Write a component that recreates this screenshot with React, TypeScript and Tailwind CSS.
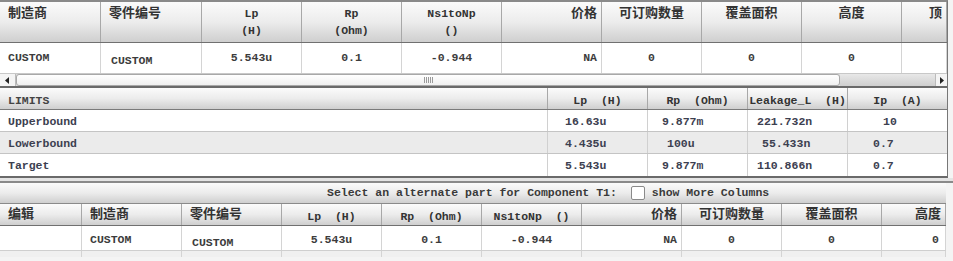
import React from 'react';

const mono = { fontFamily: '"Liberation Mono", "Noto Sans CJK SC", monospace' };

const hdrBg = 'bg-gradient-to-b from-[#fbfbfb] via-[#ececec] to-[#cfcfcf]';

type Col = { w: string; label: React.ReactNode; align: 'left' | 'center' | 'right' };

const topCols: Col[] = [
    { w: 'w-[101px]', label: '制造商', align: 'left' },
    { w: 'w-[101px]', label: '零件编号', align: 'left' },
    { w: 'w-[100px]', label: <>Lp<br />(H)</>, align: 'center' },
    { w: 'w-[100px]', label: <>Rp<br />(Ohm)</>, align: 'center' },
    { w: 'w-[100px]', label: <>Ns1toNp<br />()</>, align: 'center' },
    { w: 'w-[100px]', label: '价格', align: 'right' },
    { w: 'w-[100px]', label: '可订购数量', align: 'center' },
    { w: 'w-[100px]', label: '覆盖面积', align: 'center' },
    { w: 'w-[100px]', label: '高度', align: 'center' },
    { w: 'w-[45px]', label: '顶', align: 'right' },
];

const topRow = ['CUSTOM', 'CUSTOM', '5.543u', '0.1', '-0.944', 'NA', '0', '0', '0', ''];

const bottomCols: Col[] = [
    { w: 'w-[82px]', label: '编辑', align: 'left' },
    { w: 'w-[100px]', label: '制造商', align: 'left' },
    { w: 'w-[100px]', label: '零件编号', align: 'left' },
    { w: 'w-[100px]', label: 'Lp (H)', align: 'center' },
    { w: 'w-[100px]', label: 'Rp (Ohm)', align: 'center' },
    { w: 'w-[100px]', label: 'Ns1toNp ()', align: 'center' },
    { w: 'w-[100px]', label: '价格', align: 'right' },
    { w: 'w-[100px]', label: '可订购数量', align: 'center' },
    { w: 'w-[100px]', label: '覆盖面积', align: 'center' },
    { w: 'w-[64px]', label: '高度', align: 'right' },
];

const bottomRow = ['', 'CUSTOM', 'CUSTOM', '5.543u', '0.1', '-0.944', 'NA', '0', '0', '0'];

const alignCls = (a: Col['align']) =>
    a === 'left' ? 'text-left pl-2' : a === 'right' ? 'text-right pr-1' : 'text-center';

// values sit at slightly different offsets in each cell, like the original grid
const limits = [
    { name: 'Upperbound', v: ['16.63u', '9.877m', '221.732n', '10'], pads: ['pl-[17px]', 'pl-[14px]', 'pl-[9px]', 'pl-[35px]'], bg: 'bg-white' },
    { name: 'Lowerbound', v: ['4.435u', '100u', '55.433n', '0.7'], pads: ['pl-[17px]', 'pl-[19px]', 'pl-[14px]', 'pl-[25px]'], bg: 'bg-[#ebebeb]' },
    { name: 'Target', v: ['5.543u', '9.877m', '110.866n', '0.7'], pads: ['pl-[17px]', 'pl-[14px]', 'pl-[9px]', 'pl-[25px]'], bg: 'bg-white' },
];

export default function App() {
    return (
        <div className="w-[953px] h-[261px] overflow-hidden bg-[#f4f4f4] text-[#333]" style={mono}>
            {/* Top grid */}
            <div className="w-[948px] border-t-2 border-[#8a8a8a] border-r border-r-[#777]">
                <div className={`flex h-[41px] border-b border-[#707070] ${hdrBg}`}>
                    {topCols.map((c, i) => (
                        <div
                            key={i}
                            className={`${c.w} shrink-0 border-r border-[#a8a8a8] pt-[3px] ${alignCls(c.align)} ${
                                typeof c.label === 'string' ? 'text-[13px] font-bold leading-[18px]' : 'text-[11.5px] font-bold leading-[17px]'
                            }`}
                        >
                            {c.label}
                        </div>
                    ))}
                </div>
                <div className="flex h-[30px] bg-white">
                    {topRow.map((v, i) => (
                        <div
                            key={i}
                            className={`${topCols[i].w} shrink-0 border-r border-[#d4d4d4] text-[11.5px] font-bold text-[#3c3c3c] ${
                                i === 1 ? 'pt-[9px] pl-[10px]' : 'pt-[6px]'
                            } ${i === 0 ? 'pl-2' : i === 5 ? 'text-right pr-1' : i === 1 ? '' : 'text-center'}`}
                        >
                            {v}
                        </div>
                    ))}
                </div>
                {/* horizontal scrollbar */}
                <div className="flex h-[15px] bg-[#dcdcdc] border-t border-[#c8c8c8] border-b-2 border-b-[#6a6a6a]">
                    <div className="w-[16px] flex items-center justify-center bg-[#f4f4f4] border-r border-[#bbb]">
                        <svg width="5" height="7" viewBox="0 0 5 7"><path d="M4 0 L0 3.5 L4 7 Z" fill="#222" /></svg>
                    </div>
                    <div className="w-[824px] h-full bg-gradient-to-b from-white to-[#f0f0f0] border border-[#a8a8a8] rounded-[3px] flex items-center justify-center">
                        <div className="flex gap-[1px]">
                            {[0, 1, 2, 3, 4].map((k) => (
                                <div key={k} className="w-[1px] h-[6px] bg-[#9a9a9a]" />
                            ))}
                        </div>
                    </div>
                    <div className="flex-1 bg-gradient-to-b from-[#e8e8e8] to-[#cfcfcf]" />
                    <div className="w-[12px] flex items-center justify-center bg-[#f4f4f4] border-l border-[#bbb]">
                        <svg width="5" height="7" viewBox="0 0 5 7"><path d="M1 0 L5 3.5 L1 7 Z" fill="#222" /></svg>
                    </div>
                </div>
            </div>

            {/* Limits */}
            <div className="w-[948px] border-r border-[#777] border-b-2 border-b-[#6a6a6a]">
                <div className={`flex h-[22px] border-b border-[#7a7a7a] ${hdrBg} text-[11.5px] font-bold`}>
                    <div className="w-[548px] shrink-0 border-r border-[#a8a8a8] pl-2 pt-[4px] text-[#444]">LIMITS</div>
                    {['Lp (H)', 'Rp (Ohm)', 'Leakage_L (H)', 'Ip (A)'].map((h, i) => (
                        <div key={i} className={`${i === 3 ? 'flex-1' : 'w-[100px] border-r border-[#a8a8a8]'} shrink-0 text-center pt-[4px] whitespace-pre`}>
                            {h.replace(' ', '  ')}
                        </div>
                    ))}
                </div>
                {limits.map((r) => (
                    <div key={r.name} className={`flex h-[22px] border-b border-[#c4c4c4] last:border-b-0 ${r.bg} text-[11.5px] font-bold text-[#3c4050]`}>
                        <div className="w-[548px] shrink-0 border-r border-[#d0d0d0] pl-2 pt-[3px]">{r.name}</div>
                        {r.v.map((v, i) => (
                            <div
                                key={i}
                                className={`${i === 3 ? 'flex-1' : 'w-[100px] border-r border-[#d0d0d0]'} shrink-0 pt-[3px] ${r.pads[i]}`}
                            >
                                {v}
                            </div>
                        ))}
                    </div>
                ))}
            </div>

            {/* divider */}
            <div className="h-[5px] bg-[#e4e4e4] border-b-2 border-[#8a8a8a]" />

            {/* selector bar */}
            <div className={`flex items-center h-[21px] pl-[327px] ${hdrBg} text-[11.5px] font-bold text-[#3a3a3a] border-b border-[#8a8a8a] w-[946px]`}>
                <span>Select an alternate part for Component T1:</span>
                <span className="ml-[14px] w-[14px] h-[14px] bg-white border border-[#8a8a8a] rounded-[2px]" />
                <span className="ml-[7px]">show More Columns</span>
            </div>

            {/* Bottom grid */}
            <div className="w-[946px]">
                <div className={`flex h-[22px] border-b border-[#707070] ${hdrBg}`}>
                    {bottomCols.map((c, i) => (
                        <div
                            key={i}
                            className={`${c.w} shrink-0 border-r border-[#a8a8a8] ${alignCls(c.align)} whitespace-pre ${
                                /[A-Za-z]/.test(String(c.label)) ? 'text-[11.5px] font-bold pt-[4px]' : 'text-[13px] font-bold pt-[1px]'
                            }`}
                        >
                            {String(c.label).replace(' ', '  ')}
                        </div>
                    ))}
                </div>
                <div className="flex h-[25px] bg-white border-b border-[#cfcfcf]">
                    {bottomRow.map((v, i) => (
                        <div
                            key={i}
                            className={`${bottomCols[i].w} shrink-0 border-r border-[#d4d4d4] text-[11.5px] font-bold text-[#3c3c3c] ${
                                i === 2 ? 'pt-[8px] pl-[10px]' : 'pt-[5px]'
                            } ${i === 1 ? 'pl-2' : i === 6 ? 'text-right pr-1' : i === 9 ? 'text-right pr-[6px]' : i === 2 ? '' : 'text-center'}`}
                        >
                            {v}
                        </div>
                    ))}
                </div>
                <div className="flex h-[6px] bg-[#f0f0f0]">
                    {bottomCols.map((c, i) => (
                        <div key={i} className={`${c.w} shrink-0 border-r border-[#d4d4d4]`} />
                    ))}
                </div>
            </div>
        </div>
    );
}
